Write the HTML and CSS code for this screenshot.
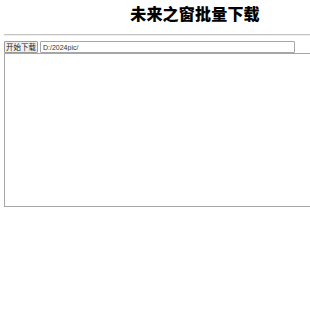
FILE: index.html
```html
<!DOCTYPE html>
<html lang="zh-CN">
<head>
  <meta charset="UTF-8" />
  <meta name="viewport" content="width=device-width, initial-scale=1.0"/>
  <title>未来之窗批量下载</title>
  <link rel="stylesheet" href="styles.css">
</head>
<body>
  <div class="page">
    <h1 class="title">未来之窗批量下载</h1>
    <hr class="divider">
    <div class="toolbar">
      <button class="btn" id="start">开始下载</button>
      <input class="path" id="path" type="text" value="D:/2024pic/">
    </div>
    <textarea class="urls" id="urls"></textarea>
  </div>
</body>
</html>
```

FILE: styles.css
```css
* {
  box-sizing: border-box;
}

html, body {
  margin: 0;
  padding: 0;
  background: #fff;
}

body {
  font-family: "Noto Sans CJK SC", "Noto Sans", sans-serif;
}

.page {
  width: 310px;
  height: 310px;
  padding: 0 0 0 4px;
  overflow: hidden;
}

.title {
  width: 382px;
  margin: 0;
  padding-top: 4px;
  height: 34px;
  text-align: center;
  font-size: 16px;
  letter-spacing: 0.2px;
  line-height: 19px;
  font-weight: 900;
  color: #000;
}

.divider {
  margin: 0 0 5px 0;
  border: none;
  border-top: 1px solid #c4c4c4;
  border-bottom: 1px solid #ececec;
  height: 0;
}

.toolbar {
  display: flex;
  align-items: flex-start;
  gap: 2px;
  height: 12px;
}

.btn {
  height: 12px;
  width: 34px;
  padding: 0;
  font-family: inherit;
  font-size: 7.5px;
  line-height: 10px;
  color: #222;
  background: #efefef;
  border: 1px solid #9a9a9a;
  border-radius: 1px;
}

.path {
  width: 255px;
  height: 12px;
  padding: 0 2px;
  font-family: "Liberation Sans", sans-serif;
  font-size: 7px;
  color: #333;
  border: 1px solid #a6a6a6;
  border-radius: 1px;
  outline: none;
}

.urls {
  display: block;
  width: 330px;
  height: 154px;
  margin: 0;
  border: 1px solid #a6a6a6;
  resize: none;
}
```
